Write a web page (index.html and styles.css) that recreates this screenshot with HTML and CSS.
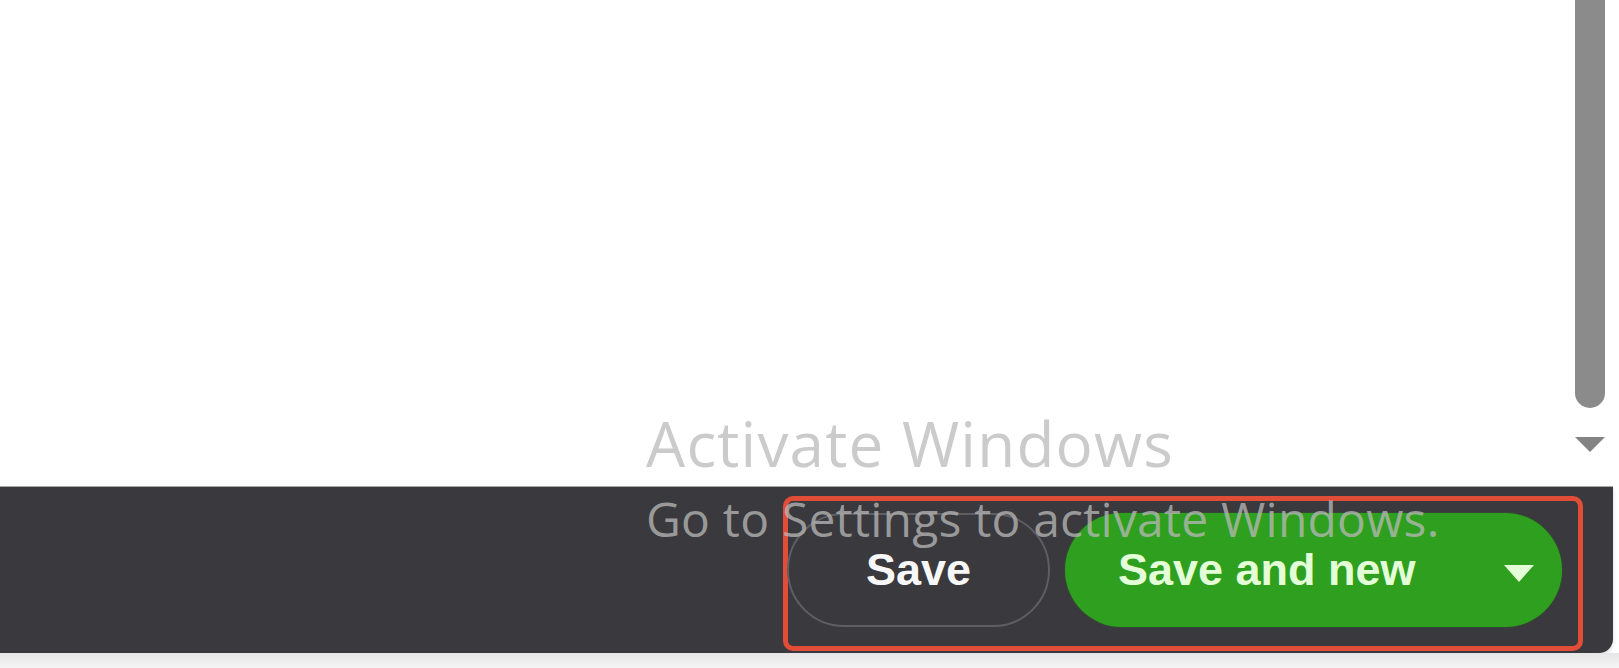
FILE: index.html
```html
<!DOCTYPE html>
<html lang="en">
<head>
<meta charset="utf-8">
<title>Save dialog footer</title>
<link rel="stylesheet" href="styles.css">
</head>
<body>
<div class="page">
  <div class="content">
    <div class="content-body"></div>
    <div class="scrollbar">
      <div class="thumb"></div>
      <div class="arrow-down"></div>
    </div>
  </div>
  <div class="footer">
    <div class="highlight">
      <button class="btn btn-save" type="button">Save</button>
      <button class="btn btn-primary" type="button">
        <span>Save and new</span>
        <svg class="caret" width="32" height="19" viewBox="0 0 32 19"><path d="M1 1 H31 L16 18 Z" fill="currentColor"/></svg>
      </button>
    </div>
  </div>
  <div class="bottom-strip"></div>
  <div class="watermark">
    <div class="wm-title">Activate Windows</div>
    <div class="wm-sub">Go to Settings to activate Windows.</div>
  </div>
</div>
</body>
</html>
```

FILE: styles.css
```css
* { box-sizing: border-box; }

html, body {
  margin: 0;
  padding: 0;
  background: #ffffff;
}

.page {
  position: relative;
  width: 1619px;
  height: 668px;
  overflow: hidden;
  display: flex;
  flex-direction: column;
  background: #ffffff;
}

.content {
  height: 486px;
  display: flex;
  flex-direction: row;
}

.content-body {
  flex: 1;
  background: #ffffff;
}

.scrollbar {
  width: 30px;
  margin-right: 14px;
  display: flex;
  flex-direction: column;
  align-items: center;
}

.thumb {
  width: 30px;
  height: 408px;
  background: #8b8b8b;
  border-radius: 0 0 15px 15px;
}

.arrow-down {
  margin-top: 29px;
  width: 0;
  height: 0;
  border-left: 15px solid transparent;
  border-right: 15px solid transparent;
  border-top: 15px solid #838383;
}

.footer {
  height: 167px;
  margin-right: 6px;
  background: #3a393e;
  border-top: 1px solid #a6a6a6;
  border-bottom-right-radius: 14px;
  display: flex;
  justify-content: flex-end;
  align-items: flex-start;
  padding-top: 9px;
  padding-right: 30px;
  box-shadow: 0 2px 4px rgba(0, 0, 0, 0.15);
}

.highlight {
  display: flex;
  align-items: center;
  gap: 15px;
  border: 5px solid #e24d37;
  border-radius: 10px;
  padding: 12px 16px 19px 0;
}

.btn {
  height: 114px;
  border-radius: 57px;
  font-family: "Liberation Sans", Arial, sans-serif;
  font-weight: 700;
  font-size: 45px;
  cursor: pointer;
}

.btn-save {
  width: 263px;
  margin-left: -1px;
  background: transparent;
  color: #f7f7f7;
  border: 2px solid #5f5e64;
}

.btn-primary {
  width: 497px;
  background: #2f9f1f;
  color: #e4ffd8;
  border: none;
  display: flex;
  align-items: center;
  justify-content: space-between;
  padding: 0 27px 0 53px;
  box-shadow: 0 0 2px rgba(40, 120, 30, 0.8);
}

.caret {
  display: block;
  margin-top: 6px;
}

.bottom-strip {
  flex: 1;
  background: linear-gradient(#e6e6e6, #f5f5f5);
}

.watermark {
  position: absolute;
  left: 646px;
  top: 412px;
  display: flex;
  flex-direction: column;
  font-family: "Open Sans", "Noto Sans", sans-serif;
  font-weight: 400;
  color: rgba(185, 185, 185, 0.75);
  pointer-events: none;
  white-space: nowrap;
}

.wm-title {
  font-size: 62px;
  line-height: 1;
  letter-spacing: 1.2px;
}

.wm-sub {
  font-size: 48px;
  line-height: 1;
  margin-top: 21px;
  letter-spacing: 0.2px;
}
```
